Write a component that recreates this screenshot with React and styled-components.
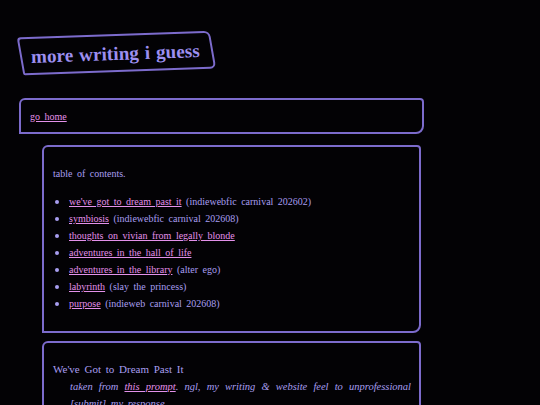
import React from 'react'
import styled, { createGlobalStyle } from 'styled-components'

const GlobalStyle = createGlobalStyle`
    html, body {
        margin: 0;
        padding: 0;
        background-color: #030205;
    }
    body {
        font-family: "Liberation Serif", "DejaVu Serif", serif;
        color: #a89ef0;
    }
`;

const contents = [
    { title: "we've got to dream past it", note: '(indiewebfic carnival 202602)' },
    { title: 'symbiosis', note: '(indiewebfic carnival 202608)' },
    { title: 'thoughts on vivian from legally blonde' },
    { title: 'adventures in the hall of life' },
    { title: 'adventures in the library', note: '(alter ego)' },
    { title: 'labyrinth', note: '(slay the princess)' },
    { title: 'purpose', note: '(indieweb carnival 202608)' },
]

function App() {
    return (
        <Page>
            <GlobalStyle />
            <Header>
                <Title>more writing i guess</Title>
            </Header>
            <Nav>
                <PinkLink href="#">go home</PinkLink>
            </Nav>
            <Main>
                <Card>
                    <Text>table of contents.</Text>
                    <List>
                        {contents.map(item => (
                            <Item key={item.title}>
                                <PinkLink href="#">{item.title}</PinkLink>
                                {item.note && <> {item.note}</>}
                            </Item>
                        ))}
                    </List>
                </Card>
                <Card>
                    <Heading>We've Got to Dream Past It</Heading>
                    <Prompt>
                        taken from <PinkLink href="#">this prompt</PinkLink>. ngl, my writing &amp; website feel to unprofessional [submit] my response.
                    </Prompt>
                </Card>
            </Main>
        </Page>
    )
}

const Page = styled.div`
    padding: 34px 0 40px 19px;
    font-size: 10px;
    line-height: 17px;
    word-spacing: 2px;
`;

const Header = styled.div`
    padding-left: 1px;
    margin-bottom: 26px;
`;

const Title = styled.h1`
    position: relative;
    display: inline-block;
    margin: 0;
    padding: 7px 13px 5px 11px;
    font-size: 19px;
    line-height: 26px;
    font-weight: bold;
    color: #9d8ff0;
    letter-spacing: 0.1px;
    word-spacing: 1px;
    transform: rotate(-2deg);

    &::before {
        content: '';
        position: absolute;
        inset: 0;
        border: 2px solid #7c6bcc;
        border-radius: 4px 6px 6px 2px;
        transform: skewX(8deg);
    }
`;

const Box = styled.div`
    border: 2px solid #7c6bcc;
    border-radius: 6px 4px 8px 0;
`;

const Nav = styled(Box)`
    display: flex;
    align-items: center;
    padding-left: 9px;
    box-sizing: border-box;
    width: 405px;
    height: 36px;
`;

const Main = styled.div`
    display: flex;
    flex-direction: column;
    gap: 8px;
    width: 379px;
    margin: 11px 0 0 23px;
`;

const Card = styled(Box)`
    padding: 18px 8px 19px 9px;
`;

const Text = styled.p`
    margin: 0 0 11px;
`;

const List = styled.ul`
    margin: 0;
    padding: 0 0 0 16px;

    li::marker {
        font-size: 12px;
    }
`;

const Item = styled.li``;

const PinkLink = styled.a`
    color: #e391ea;
    text-decoration: underline;
    text-underline-offset: 1px;
`;

const Heading = styled.h2`
    margin: 0;
    font-size: 11px;
    font-weight: normal;
    color: #a89ef0;
`;

const Prompt = styled.p`
    margin: 0;
    padding-left: 17px;
    font-size: 10.5px;
    font-style: italic;
    text-align: justify;
`;

export default App
